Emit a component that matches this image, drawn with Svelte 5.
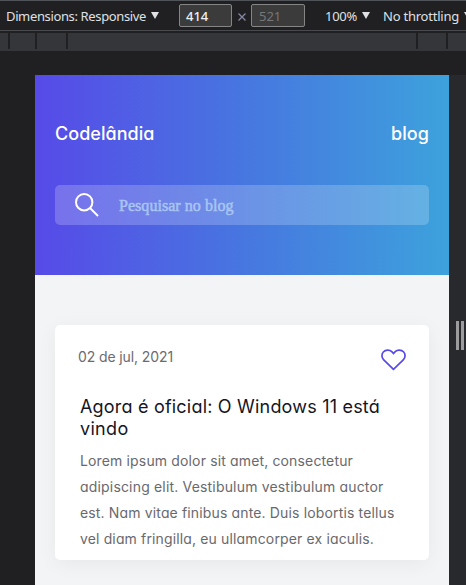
<script>
  const summary = [
    { text: 'Lorem ipsum dolor sit amet, consectetur', width: 273 },
    { text: 'adipiscing elit. Vestibulum vestibulum auctor', width: 303.5 },
    { text: 'est. Nam vitae finibus ante. Duis lobortis tellus', width: 314.5 },
    { text: 'vel diam fringilla, eu ullamcorper ex iaculis.', width: 294 }
  ];
  const title = [
    { text: 'Agora é oficial: O Windows 11 está', width: 300 },
    { text: 'vindo', width: 48.5 }
  ];

  // Spreads the letters so that the label fills the given width.
  function fit(node, width) {
    const measure = () => {
      node.style.letterSpacing = '0px';
      const natural = node.getBoundingClientRect().width;
      node.style.letterSpacing = `${(width - natural) / node.textContent.length}px`;
    };
    measure();
    document.fonts.ready.then(measure);
  }
</script>

<div class="devtools">
  <div class="toolbar">
    <span class="label dims"><span use:fit={140}>Dimensions: Responsive</span></span>
    <svg class="arrow" viewBox="0 0 8 7"><path d="M0 0h8L4 7z" /></svg>
    <div class="field w">414</div>
    <svg class="times" viewBox="0 0 8 8"><path d="M.5.5l7 7M7.5.5l-7 7" /></svg>
    <div class="field h">521</div>
    <span class="label zoom"><span use:fit={32}>100%</span></span>
    <svg class="arrow" viewBox="0 0 8 7"><path d="M0 0h8L4 7z" /></svg>
    <span class="label throttle"><span use:fit={76}>No throttling</span></span>
    <svg class="arrow" viewBox="0 0 8 7"><path d="M0 0h8L4 7z" /></svg>
  </div>
  <div class="ruler">
    <i style:width="8px"></i><i style:width="25px"></i><i style:width="29px"></i><i style:width="348px"></i><i style:width="28px"></i>
  </div>
  <div class="stage">
    <div class="page">
      <header>
        <nav>
          <span class="brand"><span use:fit={99.5}>Codelândia</span></span>
          <span class="brand"><span use:fit={38}>blog</span></span>
        </nav>
        <div class="search">
          <svg width="24" height="24" viewBox="0 0 24 24"><circle cx="9.2" cy="9.2" r="8.2" /><path d="M15 15l8 8" /></svg>
          <span class="placeholder"><span use:fit={114.5}>Pesquisar no blog</span></span>
        </div>
      </header>
      <main>
        <article>
          <div class="meta">
            <span class="date"><span use:fit={95}>02 de jul, 2021</span></span>
            <svg width="25" height="22" viewBox="0 0 25 22"><path d="M12.5 20.4L2.5 10.6C.5 8.6.4 5 2.3 3 4.7.5 8.6.5 10.8 2.7L12.5 4.5 14.2 2.7C16.4.5 20.3.5 22.7 3 24.6 5 24.5 8.6 22.5 10.6Z" /></svg>
          </div>
          <h2>{#each title as line}<div><span use:fit={line.width}>{line.text}</span></div>{/each}</h2>
          <div class="summary">{#each summary as line}<div><span use:fit={line.width}>{line.text}</span></div>{/each}</div>
        </article>
      </main>
    </div>
    <div class="resizer"><b></b><b></b></div>
  </div>
</div>

<style>
  :global(body) { margin: 0; overflow: hidden; }
  .devtools { width: 466px; height: 585px; overflow: hidden; background: #202022; display: flex; flex-direction: column; }
  .devtools * { box-sizing: border-box; }
  span { white-space: nowrap; }
  svg { display: block; flex: none; }
  .toolbar { height: 31px; flex: none; display: flex; align-items: center; padding-left: 6px; border-top: 1px solid #505357; border-bottom: 1px solid #494a4d; font: 13px/18px "Noto Sans", sans-serif; color: #dfe1e5; overflow: hidden; }
  .label { flex: none; padding-top: 1px; }
  .dims { width: 145px; }
  .arrow { width: 8px; height: 7px; fill: #dfe1e5; }
  .field { flex: none; width: 53px; height: 23px; border: 1px solid #858585; border-radius: 2px; background: #3b3b3b; padding: 2px 0 0 6px; color: #f0f0f0; font-weight: 500; }
  .w { margin-left: 20px; }
  .times { width: 8px; height: 8px; margin: 3px 5px 0 6px; stroke: #8588a5; stroke-width: 1.3; }
  .h { width: 54px; padding-left: 7px; color: #777; font-weight: 400; }
  .zoom { width: 37px; margin-left: 20px; }
  .throttle { width: 81px; margin-left: 13px; }
  .ruler { flex: none; height: 18px; margin-top: 2px; background: #35363a; display: flex; }
  .ruler i { flex: none; box-sizing: content-box; height: 16px; border-right: 2px solid #202022; }
  .stage { flex: 1; margin-top: 24px; padding-left: 35px; display: flex; }
  .page { width: 414px; height: 510px; background: #f3f4f6; font-family: Inter, sans-serif; font-feature-settings: "cv11"; }
  header { height: 200px; padding: 46px 20px 0; background: linear-gradient(90deg, #574ae8, #4776e0 50%, #3da2dc); }
  nav { height: 26px; display: flex; justify-content: space-between; color: #fff; font-size: 18px; line-height: 25px; font-weight: 500; }
  .search { margin-top: 38px; height: 40px; border-radius: 5px; background: rgba(255, 255, 255, .2); display: flex; align-items: center; padding-left: 20px; }
  .search svg { fill: none; stroke: #fff; stroke-width: 2; }
  .placeholder { margin-left: 20px; padding-top: 2px; font: 16px/20px "Liberation Serif", serif; color: #a9c5f3; -webkit-text-stroke: .5px #a9c5f3; }
  main { padding: 50px 20px 0; }
  article { height: 235px; border-radius: 5px; background: #fff; box-shadow: 0 4px 20px rgba(0, 0, 0, .05); padding: 23px 23px 0; }
  .meta { display: flex; justify-content: space-between; height: 25px; color: #6b6b6f; font-size: 14px; line-height: 18px; }
  .meta svg { margin-top: 1px; fill: none; stroke: #574ae8; stroke-width: 1.7; stroke-linejoin: miter; }
  h2 { margin: 23px 0 0 2px; font-weight: 400; font-size: 18px; line-height: 22px; color: #15151f; }
  .summary { margin: 8px 0 0 2px; font-size: 14px; line-height: 26px; color: #69696d; }
  .resizer { width: 17px; background: #28292d; display: flex; gap: 2px; padding: 246px 0 0 7px; }
  .resizer b { width: 3px; height: 29px; background: #9c9c9c; }
</style>
